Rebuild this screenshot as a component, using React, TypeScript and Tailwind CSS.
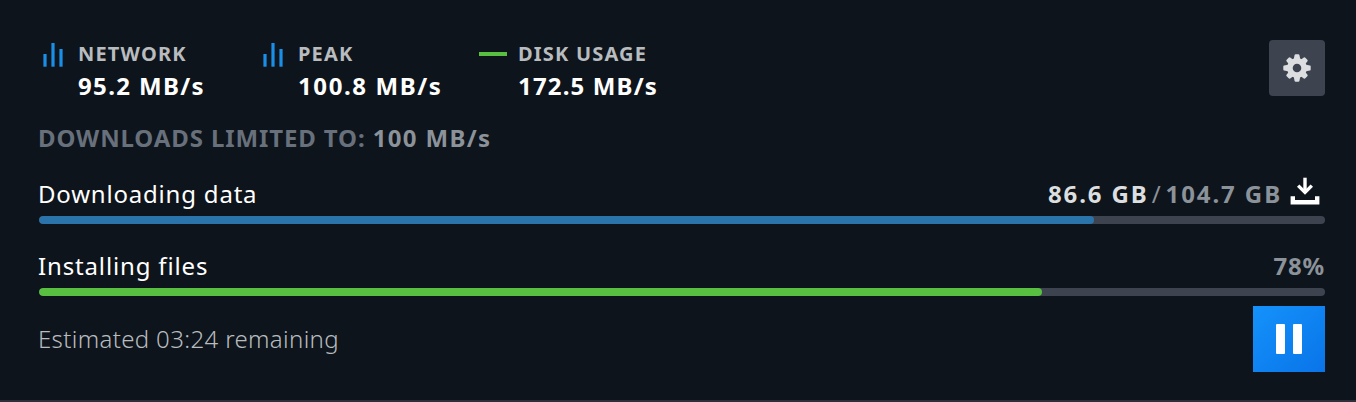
import { clsx } from "clsx";

const stats = [
  { label: "NETWORK", value: "95.2 MB/s", icon: "bars", spacing: "tracking-[1.35px]" },
  { label: "PEAK", value: "100.8 MB/s", icon: "bars", spacing: "tracking-[1.6px]" },
  { label: "DISK USAGE", value: "172.5 MB/s", icon: "line", spacing: "tracking-[1.15px]" },
];

function BarsIcon() {
  return (
    <svg width="28" height="28" viewBox="0 0 28 28" fill="#1a8fe8">
      <rect x="4.4" y="14" width="3.2" height="12.7" />
      <rect x="12.4" y="3" width="3.2" height="23.7" />
      <rect x="20.4" y="9" width="3.2" height="17.7" />
    </svg>
  );
}

function GearIcon() {
  return (
    <svg width="28" height="28" viewBox="-14 -14 28 28" fill="#dcdedf">
      {[0, 90, 180, 270].map((angle) => (
        <path key={angle} transform={`rotate(${angle})`} d="M-1.4-13.7h2.8q.8 0 1 .8L3.4-8h-6.8l1-4.9q.2-.8 1-.8Z" />
      ))}
      {[45, 135, 225, 315].map((angle) => (
        <path key={angle} transform={`rotate(${angle})`} d="M-1.4-13.2h2.8q1.1 0 1.2 1L3.2-8h-6.4l.6-4.2q.1-1 1.2-1Z" />
      ))}
      <circle r="7.1" fill="none" stroke="#dcdedf" strokeWidth="5.6" />
    </svg>
  );
}

function DownloadIcon() {
  return (
    <svg width="30" height="28" viewBox="0 0 30 28" fill="none" stroke="#fff">
      <path d="M15 .7V16" strokeWidth="3.4" />
      <path d="M8.2 8.6 15 15.4l6.8-6.8" strokeWidth="3.4" />
      <path d="M2.8 19.3v6h24.4v-6" strokeWidth="4.4" />
    </svg>
  );
}

function ProgressBar({ value, color }: { value: number; color: string }) {
  return (
    <div className="mt-2 h-2 overflow-hidden rounded bg-[#3d4450]">
      <div className={clsx("h-full rounded", color)} style={{ width: `${value}%` }} />
    </div>
  );
}

export default function App() {
  return (
    <div className="flex h-[402px] flex-col border-b-2 border-[#2d2f3a] bg-[#0e141b] pt-10 pr-[31px] pl-[39px] font-['Noto_Sans',sans-serif] text-2xl leading-7 text-white">
      <div className="flex justify-between">
        <div className="flex">
          {stats.map((s) => (
            <div key={s.label} className="flex w-[220px] gap-[11px]">
              {s.icon === "bars" ? <BarsIcon /> : <div className="mt-3 h-1 w-7 bg-[#59bf40]" />}
              <div className="whitespace-nowrap">
                <div className="text-xl leading-7 font-bold tracking-[1.2px] text-[#b8bcbf]">{s.label}</div>
                <div className={clsx("mt-1 leading-7 font-bold", s.spacing)}>{s.value}</div>
              </div>
            </div>
          ))}
        </div>
        <button className="flex size-14 items-center justify-center rounded bg-[#3d4450]">
          <GearIcon />
        </button>
      </div>

      <div className="-ml-px mt-6 font-bold tracking-[0.88px] text-[#67707b]">
        DOWNLOADS LIMITED TO: <span className="tracking-[1.35px] text-[#8b929a]">100 MB/s</span>
      </div>

      <div className="mt-7">
        <div className="flex justify-between">
          <div className="-ml-px tracking-[0.8px]">Downloading data</div>
          <div className="flex font-bold tracking-[1.9px] text-[#8b929a]">
            <span className="text-[#dcdedf]">86.6 GB</span>
            <span className="mx-[3px] font-normal">/</span>
            <span>104.7 GB</span>
            <div className="mr-[5px] ml-2 -mt-[3px]">
              <DownloadIcon />
            </div>
          </div>
        </div>
        <ProgressBar value={82} color="bg-[#2a73ab]" />
      </div>

      <div className="mt-7">
        <div className="flex justify-between">
          <div className="-ml-px tracking-[0.85px]">Installing files</div>
          <div className="font-bold tracking-[0.8px] text-[#8b929a]">78%</div>
        </div>
        <ProgressBar value={78} color="bg-[#59bf40]" />
      </div>

      <div className="mt-[10px] flex items-center justify-between">
        <div className="-ml-px font-light tracking-[0.35px] text-[#b8bcbf]">Estimated 03:24 remaining</div>
        <button className="flex h-[66px] w-[72px] items-center justify-center bg-linear-to-br from-[#1592fb] to-[#0a74e8]">
          <svg width="28" height="30" viewBox="0 0 28 30" fill="#fff">
            <rect x="1" width="9" height="30" rx="1" />
            <rect x="18" width="9" height="30" rx="1" />
          </svg>
        </button>
      </div>
    </div>
  );
}
